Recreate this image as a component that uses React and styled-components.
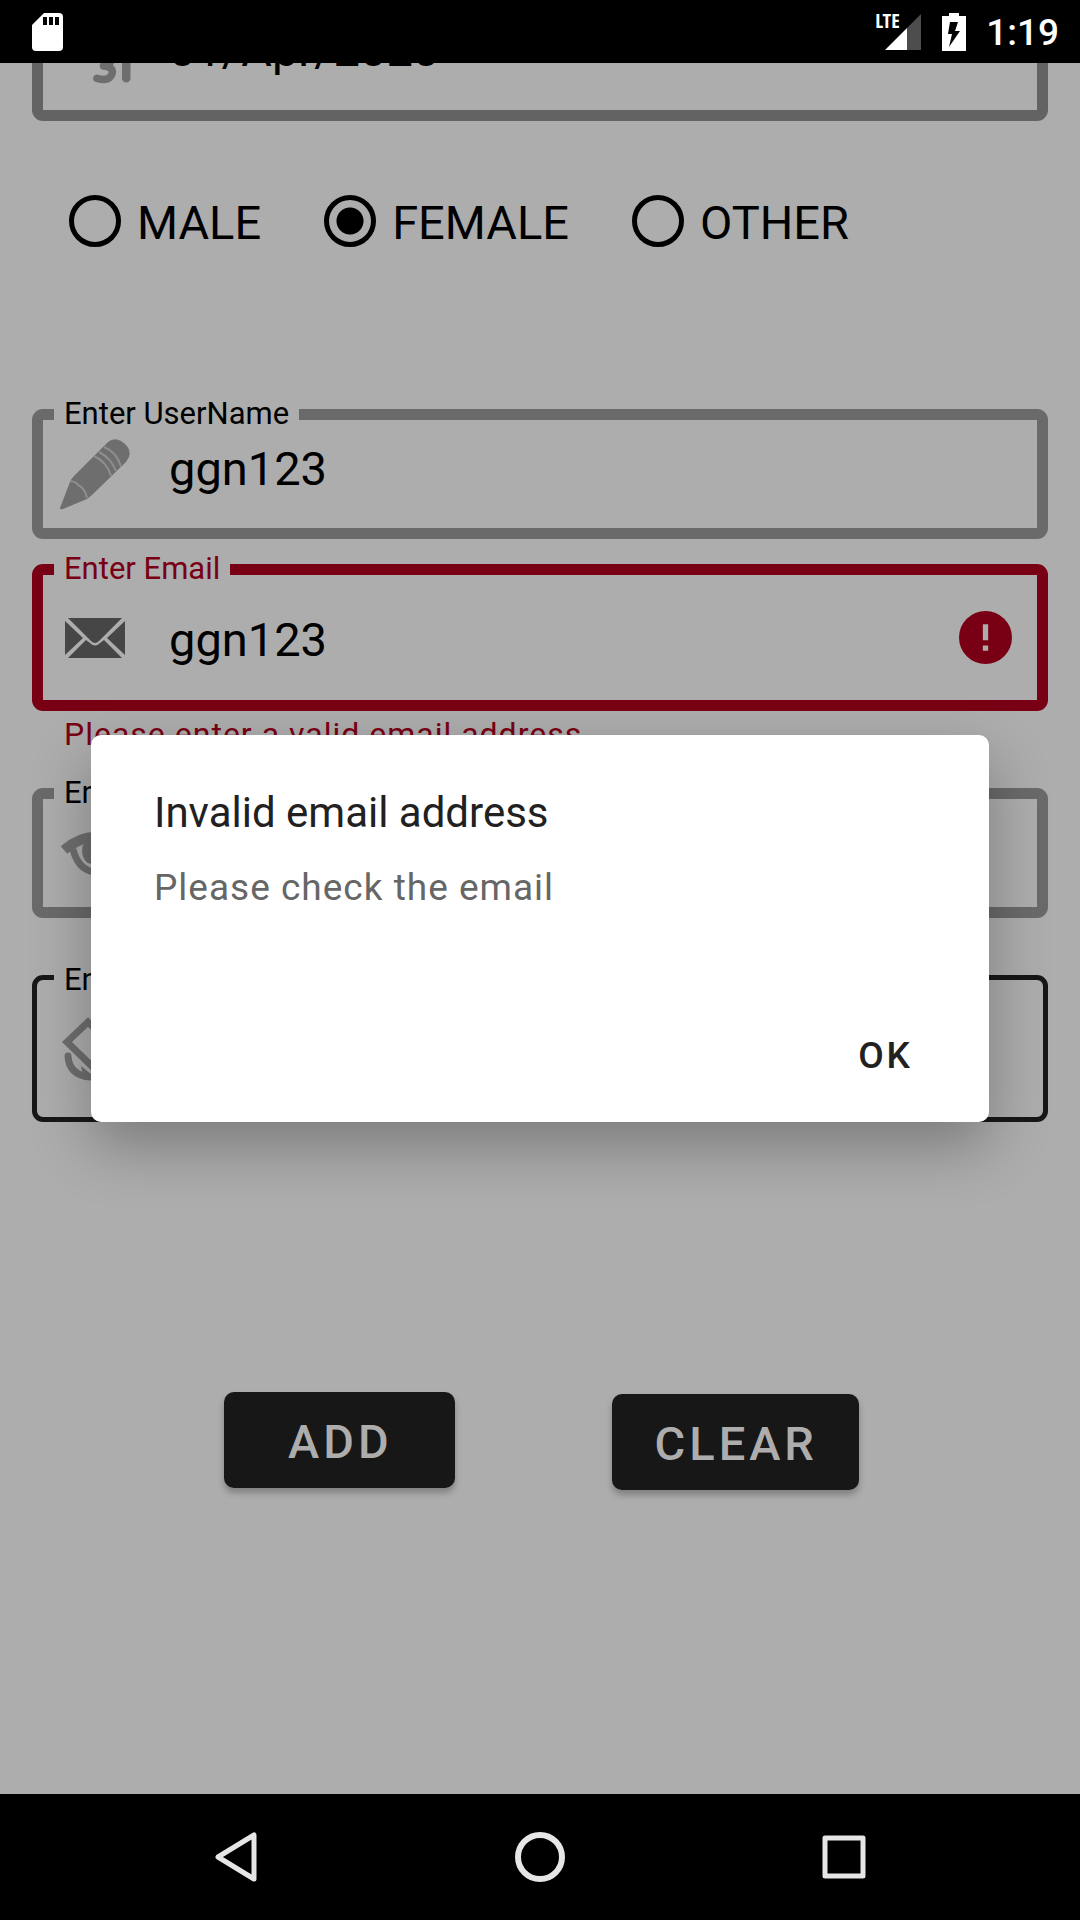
import React from "react";
import styled, { createGlobalStyle, css } from "styled-components";

const Global = createGlobalStyle`
  * { box-sizing: border-box; }
  body { margin: 0; background: #adadad; }
  body, button, input { font-family: Roboto, "Liberation Sans", sans-serif; }
`;

const Screen = styled.div`
  position: relative;
  display: flex;
  flex-direction: column;
  height: 100vh;
  overflow: hidden;
  background: #adadad;
`;

const StatusBar = styled.header`
  flex: none;
  display: flex;
  align-items: center;
  height: 63px;
  padding: 0 21px 0 32px;
  background: #000;
  color: #fff;
  svg { display: block; }
`;

const StatusRight = styled.div`
  display: flex;
  align-items: center;
  margin-left: auto;
`;

const Network = styled.span`
  position: relative;
  display: block;
  width: 46px;
  height: 38px;
  margin-right: 21px;
  svg { margin-left: 10px; }
`;

const NetworkType = styled.span`
  position: absolute;
  left: 0;
  top: 0;
  font: 700 20px/16px "Open Sans Condensed", "Roboto Condensed", "DejaVu Sans Condensed", Roboto, sans-serif;
`;

const Clock = styled.time`
  margin-left: 20px;
  padding-top: 2px;
  font-size: 37px;
  line-height: 44px;
  font-weight: 500;
`;

const Scroller = styled.main`
  flex: 1;
  min-height: 0;
  display: flex;
  flex-direction: column;
  padding: 0 32px;
  overflow: hidden;
`;

const DateSlot = styled.div`
  flex: none;
  display: flex;
  align-items: flex-end;
  height: 58px;
  overflow: hidden;
`;

const FieldBox = styled.fieldset`
  flex: 1;
  display: flex;
  align-items: center;
  min-width: 0;
  height: ${(p) => (p.$tall ? 147 : 130)}px;
  margin: 0;
  padding: 0 25px 0 16px;
  border: 11px solid ${(p) => p.$color || "#6a6a6a"};
  border-radius: 11px;
  ${(p) =>
    p.$focused &&
    css`
      border-width: 5px;
      padding: 0 31px 0 22px;
    `}
`;

const Legend = styled.legend`
  height: ${(p) => (p.$focused ? 5 : 11)}px;
  margin-left: -5px;
  padding: 0 10px;
  font-size: 31px;
  line-height: 10px;
  color: ${(p) => p.$color || "#000"};
`;

const IconSlot = styled.span`
  flex: none;
  display: flex;
  align-items: center;
  justify-content: center;
  width: 72px;
  height: 76px;
  margin-right: 38px;
`;

const TextInput = styled.input`
  flex: 1;
  min-width: 0;
  height: ${(p) => (p.$raised ? 68 : 60)}px;
  padding: ${(p) => (p.$raised ? "0 0 12px" : "4px 0 0")};
  border: 0;
  outline: 0;
  background: transparent;
  color: #000;
  font-size: 47px;
  line-height: 56px;
`;

const RadioRow = styled.div`
  flex: none;
  display: flex;
  gap: 63px;
  margin: 73px 0 161px;
  padding-left: 37px;
`;

const RadioLabel = styled.label`
  display: flex;
  align-items: center;
  gap: 16px;
  height: 54px;
  font-size: 47px;
  line-height: 51px;
  color: #000;
`;

const RadioText = styled.span`
  padding-top: 3px;
`;

const Radio = styled.input`
  appearance: none;
  width: 52px;
  height: 52px;
  margin: 0;
  border: 5px solid #000;
  border-radius: 50%;
  background: transparent;
  &:checked { background: radial-gradient(circle, #000 13px, transparent 14px); }
`;

const Field = styled.div`
  flex: none;
  display: flex;
  width: 100%;
  margin-top: ${(p) => p.$gap || 0}px;
`;

const Helper = styled.p`
  flex: none;
  margin: 3px 0 0 32px;
  font-size: 32px;
  line-height: 40px;
  letter-spacing: 1px;
  color: #790014;
`;

const Actions = styled.div`
  flex: none;
  display: flex;
  justify-content: center;
  align-items: flex-start;
  gap: 157px;
  margin-top: 270px;
  padding-left: 3px;
`;

const ActionButton = styled.button`
  height: 96px;
  margin: ${(p) => (p.$lower ? 2 : 0)}px 0 0;
  padding: 2px ${(p) => (p.$lower ? 41 : 62)}px 0 ${(p) => (p.$lower ? 43 : 64)}px;
  border: 0;
  border-radius: 10px;
  background: #171717;
  color: #adadad;
  font-size: 47px;
  font-weight: 500;
  letter-spacing: 4px;
  box-shadow: 0 5px 6px rgba(0, 0, 0, 0.25);
`;

const NavBar = styled.nav`
  flex: none;
  display: flex;
  justify-content: center;
  align-items: center;
  gap: 184px;
  height: 126px;
  background: #000;
`;

const NavButton = styled.button`
  display: grid;
  place-items: center;
  width: 120px;
  height: 96px;
  padding: 0;
  border: 0;
  background: transparent;
`;

const Overlay = styled.div`
  position: absolute;
  inset: 63px 0 126px;
  display: flex;
  align-items: center;
  padding: 0 91px;
`;

const Dialog = styled.section`
  flex: 1;
  display: flex;
  flex-direction: column;
  min-height: 387px;
  padding: 48px 63px 19px;
  border-radius: 10px;
  background: #fff;
  box-shadow: 0 24px 60px rgba(0, 0, 0, 0.29);
`;

const DialogTitle = styled.h2`
  margin: 0;
  font-size: 42px;
  line-height: 60px;
  font-weight: 400;
  color: #212121;
`;

const DialogText = styled.p`
  margin: 21px 0 0;
  font-size: 37px;
  line-height: 48px;
  letter-spacing: 1px;
  color: #666;
`;

const DialogButton = styled.button`
  align-self: flex-end;
  height: 96px;
  margin-top: auto;
  padding: 0 13px;
  border: 0;
  background: transparent;
  color: #212121;
  font-size: 37px;
  font-weight: 500;
  letter-spacing: 3px;
`;

const G = "#6e6e6e";

const Pencil = () => (
  <svg width="72" height="72" viewBox="0 0 72 72">
    <path fill={G} d="M1 70 11 44Q12 41 15 38L49 4Q55-1 62 3Q73 10 70 19L67 24 33 57 28 61 4 71Q1 72 1 70Z" />
    <path fill="none" stroke="#8e8e8e" strokeWidth="2" d="M11 43Q18 44 19 47Q26 50 28 60M35 18Q48 24 52 38M40 14Q52 20 57 33M45 9Q58 14 62 29" />
  </svg>
);
const Mail = () => (
  <svg width="62" height="42" viewBox="0 0 62 42">
    <path fill="#464646" d="M4 1H58L35 24Q31 28 27 24ZM1 4 19 21 1 38ZM61 4V38L43 21ZM4 41 22 23 26 26Q31 31 36 26L40 23 58 41Z" />
  </svg>
);
const Eye = () => (
  <svg width="72" height="44" viewBox="0 0 72 44">
    <g fill="none" stroke={G}>
      <path strokeWidth="10" strokeLinejoin="round" d="M5 19Q36-7 67 19" />
      <path strokeWidth="7" d="M14 18Q19 39 36 41Q53 39 58 18" />
    </g>
    <ellipse cx="33" cy="20" rx="10" ry="13" fill={G} />
  </svg>
);
const Rotate = () => (
  <svg width="70" height="66" viewBox="0 0 70 66">
    <g fill="none" stroke={G} strokeWidth="7">
      <path d="M7 26 28 6 63 40 42 60Z" />
      <path strokeLinecap="round" d="M8 40Q9 59 30 61" />
    </g>
    <path fill={G} d="M21 50 38 64H24Z" />
  </svg>
);
const Alert = () => (
  <svg width="53" height="53" viewBox="2 2 20 20">
    <path fill="#790014" d="M12 2a10 10 0 1 0 0 20 10 10 0 0 0 0-20zm1 15h-2v-2h2zm0-4h-2V7h2z" />
  </svg>
);
const Calendar = () => (
  <svg width="76" height="76" viewBox="0 0 76 76">
    <g fill="none" stroke={G} strokeLinecap="round" strokeLinejoin="round">
      <path strokeWidth="8" d="M39 45Q54 40 55 49Q55 56 47 57Q58 58 56 65Q53 74 40 70" />
      <path strokeWidth="9" d="M66 46 71 43V70" />
    </g>
  </svg>
);

function OutlinedField({ id, label, value, icon, color, labelColor, tall, focused, raised, gap, type = "text", end }) {
  return (
    <Field $gap={gap}>
      <FieldBox $color={color} $tall={tall} $focused={focused}>
        {label && (
          <Legend $color={labelColor} $focused={focused}>
            <label htmlFor={id}>{label}</label>
          </Legend>
        )}
        <IconSlot>{icon}</IconSlot>
        <TextInput id={id} type={type} defaultValue={value} $raised={raised} aria-label={label ? undefined : "Date"} />
        {end}
      </FieldBox>
    </Field>
  );
}

export default function App() {
  return (
    <Screen>
      <Global />
      <StatusBar>
        <svg width="31" height="38" viewBox="0 0 31 38">
          <path fill="#fff" d="M12 0H27Q31 0 31 4V34Q31 38 27 38H4Q0 38 0 34V12Z" />
          <path d="M11 4h4v8h-4zM17 4h4v8h-4zM23 4h4v8h-4z" />
        </svg>
        <StatusRight>
          <Network>
            <NetworkType>LTE</NetworkType>
            <svg width="36" height="38" viewBox="0 0 36 38">
              <path fill="#4d4d4d" d="M22 15 36 1V37H22Z" />
              <path fill="#fff" d="M22 15V37H0Z" />
            </svg>
          </Network>
          <svg width="24" height="38" viewBox="0 0 24 38">
            <path fill="#fff" d="M7 0H17V3H24V38H0V3H7Z" />
            <path d="M8 9H16L13 18H18L7 34 10 21H6Z" />
          </svg>
          <Clock>1:19</Clock>
        </StatusRight>
      </StatusBar>
      <Scroller>
        <DateSlot>
          <OutlinedField id="date" value="01/Apr/2020" icon={<Calendar />} color="#636363" tall />
        </DateSlot>
        <RadioRow role="radiogroup" aria-label="Gender">
          {["MALE", "FEMALE", "OTHER"].map((g) => (
            <RadioLabel key={g}>
              <Radio type="radio" name="gender" defaultChecked={g === "FEMALE"} />
              <RadioText>{g}</RadioText>
            </RadioLabel>
          ))}
        </RadioRow>
        <OutlinedField id="user" label="Enter UserName" value="ggn123" icon={<Pencil />} raised />
        <OutlinedField id="email" label="Enter Email" value="ggn123" icon={<Mail />} color="#790014" labelColor="#790014" tall gap={25} end={<Alert />} />
        <Helper>Please enter a valid email address</Helper>
        <OutlinedField id="password" label="Enter Password" value="" type="password" icon={<Eye />} gap={34} />
        <OutlinedField id="confirm" label="Enter Confirm Password" value="" type="password" icon={<Rotate />} color="#171717" tall focused gap={57} />
        <Actions>
          <ActionButton>ADD</ActionButton>
          <ActionButton $lower>CLEAR</ActionButton>
        </Actions>
      </Scroller>
      <NavBar>
        <NavButton aria-label="Back">
          <svg width="42" height="50" viewBox="0 0 42 50" fill="none" stroke="#e6e6e6" strokeWidth="5" strokeLinejoin="round">
            <path d="M39 3V47L3 25Z" />
          </svg>
        </NavButton>
        <NavButton aria-label="Home">
          <svg width="50" height="50" viewBox="0 0 50 50" fill="none" stroke="#e6e6e6" strokeWidth="6">
            <circle cx="25" cy="25" r="22" />
          </svg>
        </NavButton>
        <NavButton aria-label="Overview">
          <svg width="44" height="44" viewBox="0 0 44 44" fill="none" stroke="#e6e6e6" strokeWidth="5" strokeLinejoin="round">
            <rect x="3" y="3" width="38" height="38" />
          </svg>
        </NavButton>
      </NavBar>
      <Overlay>
        <Dialog role="alertdialog" aria-labelledby="dialog-title">
          <DialogTitle id="dialog-title">Invalid email address</DialogTitle>
          <DialogText>Please check the email</DialogText>
          <DialogButton>OK</DialogButton>
        </Dialog>
      </Overlay>
    </Screen>
  );
}
